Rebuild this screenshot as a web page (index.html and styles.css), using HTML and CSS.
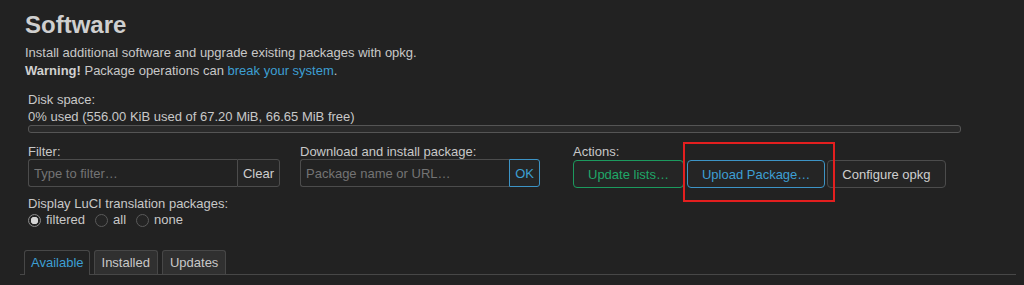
FILE: index.html
```html
<!DOCTYPE html>
<html lang="en">
<head>
  <meta charset="UTF-8" />
  <title>Software - LuCI</title>
  <link rel="stylesheet" href="styles.css">
</head>
<body>
  <div class="main">
    <h2 class="title">Software</h2>
    <div class="desc">
      Install additional software and upgrade existing packages with opkg.<br>
      <strong>Warning!</strong> Package operations can <a href="#">break your system</a>.
    </div>

    <div class="controls">
      <div class="disk">
        <label>Disk space:</label>
        <div class="disk-text">0% used (556.00 KiB used of 67.20 MiB, 66.65 MiB free)</div>
        <div class="progress"><div class="progress-bar" style="width: 0%"></div></div>
      </div>

      <div class="row">
        <div class="col col-filter">
          <label>Filter:</label>
          <div class="group">
            <input type="text" placeholder="Type to filter…" />
            <button class="btn">Clear</button>
          </div>
        </div>
        <div class="col col-install">
          <label>Download and install package:</label>
          <div class="group">
            <input type="text" placeholder="Package name or URL…" />
            <button class="btn btn-blue">OK</button>
          </div>
        </div>
        <div class="col col-actions">
          <label>Actions:</label>
          <div class="actions">
            <button class="btn btn-green">Update lists…</button>
            <span class="marked"><button class="btn btn-blue">Upload Package…</button></span>
            <button class="btn">Configure opkg</button>
          </div>
        </div>
      </div>

      <div class="lang">
        <label>Display LuCI translation packages:</label>
        <div class="radios">
          <label class="radio"><input type="radio" name="lang" checked />filtered</label>
          <label class="radio"><input type="radio" name="lang" />all</label>
          <label class="radio"><input type="radio" name="lang" />none</label>
        </div>
      </div>
    </div>

    <ul class="tabs">
      <li class="active"><a href="#">Available</a></li>
      <li><a href="#">Installed</a></li>
      <li><a href="#">Updates</a></li>
    </ul>
  </div>
</body>
</html>
```

FILE: styles.css
```css
* { box-sizing: border-box; }
body {
  margin: 0;
  padding: 0;
  background-color: #222;
  color: #c8c8c8;
  font-family: "Liberation Sans", Arial, sans-serif;
  font-size: 13px;
}
.main { padding-left: 25px; width: 1016px; }
.title {
  margin: 11px 0 0;
  font-size: 24px; line-height: 28px; font-weight: bold; color: #cfcfcf;
}
.desc { margin-top: 5px; line-height: 18px; }
.desc strong { color: #d0d0d0; }
.desc a { color: #3d9fd3; text-decoration: none; }

.controls { padding-left: 3px; width: 936px; margin-top: 11px; }
label { display: block; line-height: 17px; }
.disk-text { line-height: 17px; }
.progress {
  height: 8px; border: 1px solid #555; border-radius: 3px;
  background-color: #2a2a2a; overflow: hidden;
}
.progress-bar { height: 100%; background-color: #3d9fd3; }

.row { display: flex; margin-top: 11px; }
.row label { line-height: 15px; }
.col-filter { width: 252px; margin-right: 20px; }
.col-install { width: 240px; margin-right: 33px; }
.group { display: flex; height: 28px; }
.group input {
  flex: 1; min-width: 0; height: 28px;
  background-color: #222; color: #ccc;
  border: 1px solid #4c4c4c; border-right: none;
  border-radius: 3px 0 0 3px; padding: 0 5px;
  font-family: inherit; font-size: 13px; outline: none;
}
.group input::placeholder { color: #747474; }
.group .btn { border-radius: 0 3px 3px 0; padding: 0 5px; }

.btn {
  height: 28px; background-color: #252525; color: #cfcfcf;
  border: 1px solid #4c4c4c; border-radius: 4px;
  font-family: inherit; font-size: 13px; padding: 0 14px; cursor: pointer;
}
.btn-blue { color: #3d9fd3; border-color: #3d94c6; }
.btn-green { color: #1fa868; border-color: #1c9a5e; }
.actions { display: flex; gap: 2px; margin-top: 1px; }
.actions .btn-green { margin-right: 1px; }

.marked { position: relative; display: inline-block; }
.marked::after {
  content: ""; position: absolute;
  left: -4px; right: -10px; top: -18px; bottom: -14px;
  border: 2px solid #e41f1f; pointer-events: none;
}

.lang { margin-top: 7px; }
.radios { display: flex; align-items: center; height: 16px; }
.radio { display: flex; align-items: center; margin-right: 10px; line-height: 16px; }
.radio input {
  appearance: none; -webkit-appearance: none;
  width: 13px; height: 13px; margin: 0 5px 0 0;
  border: 1px solid #5a5a5a; border-radius: 50%; background-color: #242424;
}
.radio input:checked {
  background: radial-gradient(circle, #d6d6d6 0 3.5px, #242424 4px);
  border-color: #8a8a8a;
}

.tabs {
  list-style: none; display: flex; gap: 4px;
  margin: 22px 0 0 -5px; padding: 0 0 0 4px;
  border-bottom: 1px solid #474747; height: 25px;
}
.tabs li {
  height: 24px; border: 1px solid #474747; border-bottom: none;
  border-radius: 3px 3px 0 0; background-color: #303030;
}
.tabs li.active { background-color: #222; height: 25px; }
.tabs a {
  display: block; padding: 0 7px; line-height: 23px;
  color: #c8c8c8; text-decoration: none;
}
.tabs li.active a { color: #3d9fd3; padding: 0 5px 0 6px; }
```
